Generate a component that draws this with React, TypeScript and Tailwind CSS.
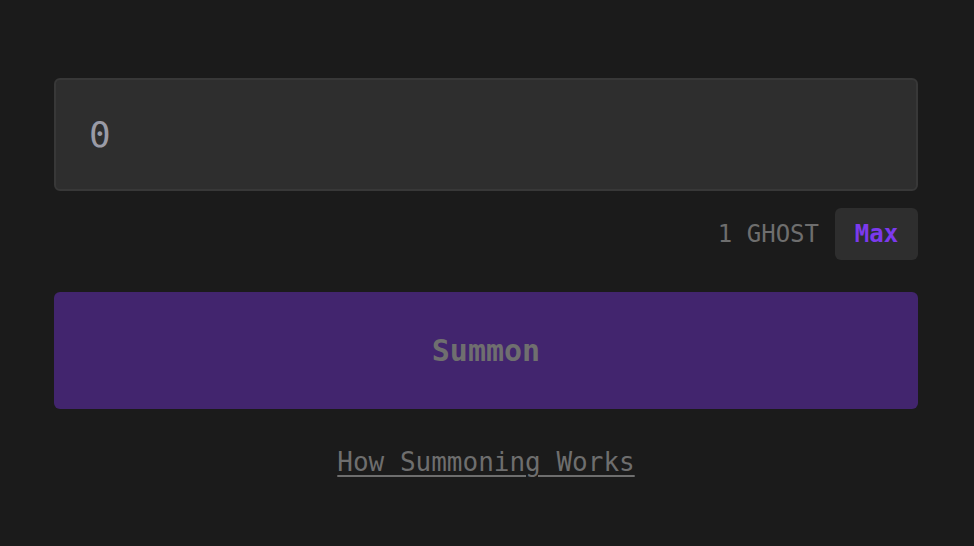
import React from "react";

export default function App() {
  return (
    <div
      className="w-[974px] h-[546px] bg-[#1b1b1b] overflow-hidden"
      style={{ fontFamily: '"DejaVu Sans Mono", "Liberation Mono", monospace' }}
    >
      <div className="pl-[54px] pr-[56px] pt-[78px] flex flex-col">
        <div className="h-[113px] rounded-[6px] border-2 border-[#383838] bg-[#2e2e2e] flex items-center px-[33px]">
          <input
            className="bg-transparent outline-none text-[36px] text-[#9a9ba6] w-full placeholder:text-[#9a9ba6]"
            placeholder="0"
            style={{ fontFamily: '"DejaVu Sans Mono", monospace' }}
          />
        </div>
        <div className="mt-[17px] flex items-center justify-end gap-[16px]">
          <span className="text-[24px] text-[#6e6e6e]">1 GHOST</span>
          <button className="h-[52px] w-[83px] rounded-[6px] bg-[#2e2e2e] text-[24px] font-bold text-[#7c3aed]">
            Max
          </button>
        </div>
        <button className="mt-[32px] h-[117px] rounded-[6px] bg-[#42256e] text-[30px] font-bold text-[#6f6f6f]">
          Summon
        </button>
        <div className="mt-[34px] flex justify-center">
          <a className="text-[26px] text-[#6e6e6e] underline underline-offset-[4px] decoration-[1.5px] cursor-pointer">
            How Summoning Works
          </a>
        </div>
      </div>
    </div>
  );
}
